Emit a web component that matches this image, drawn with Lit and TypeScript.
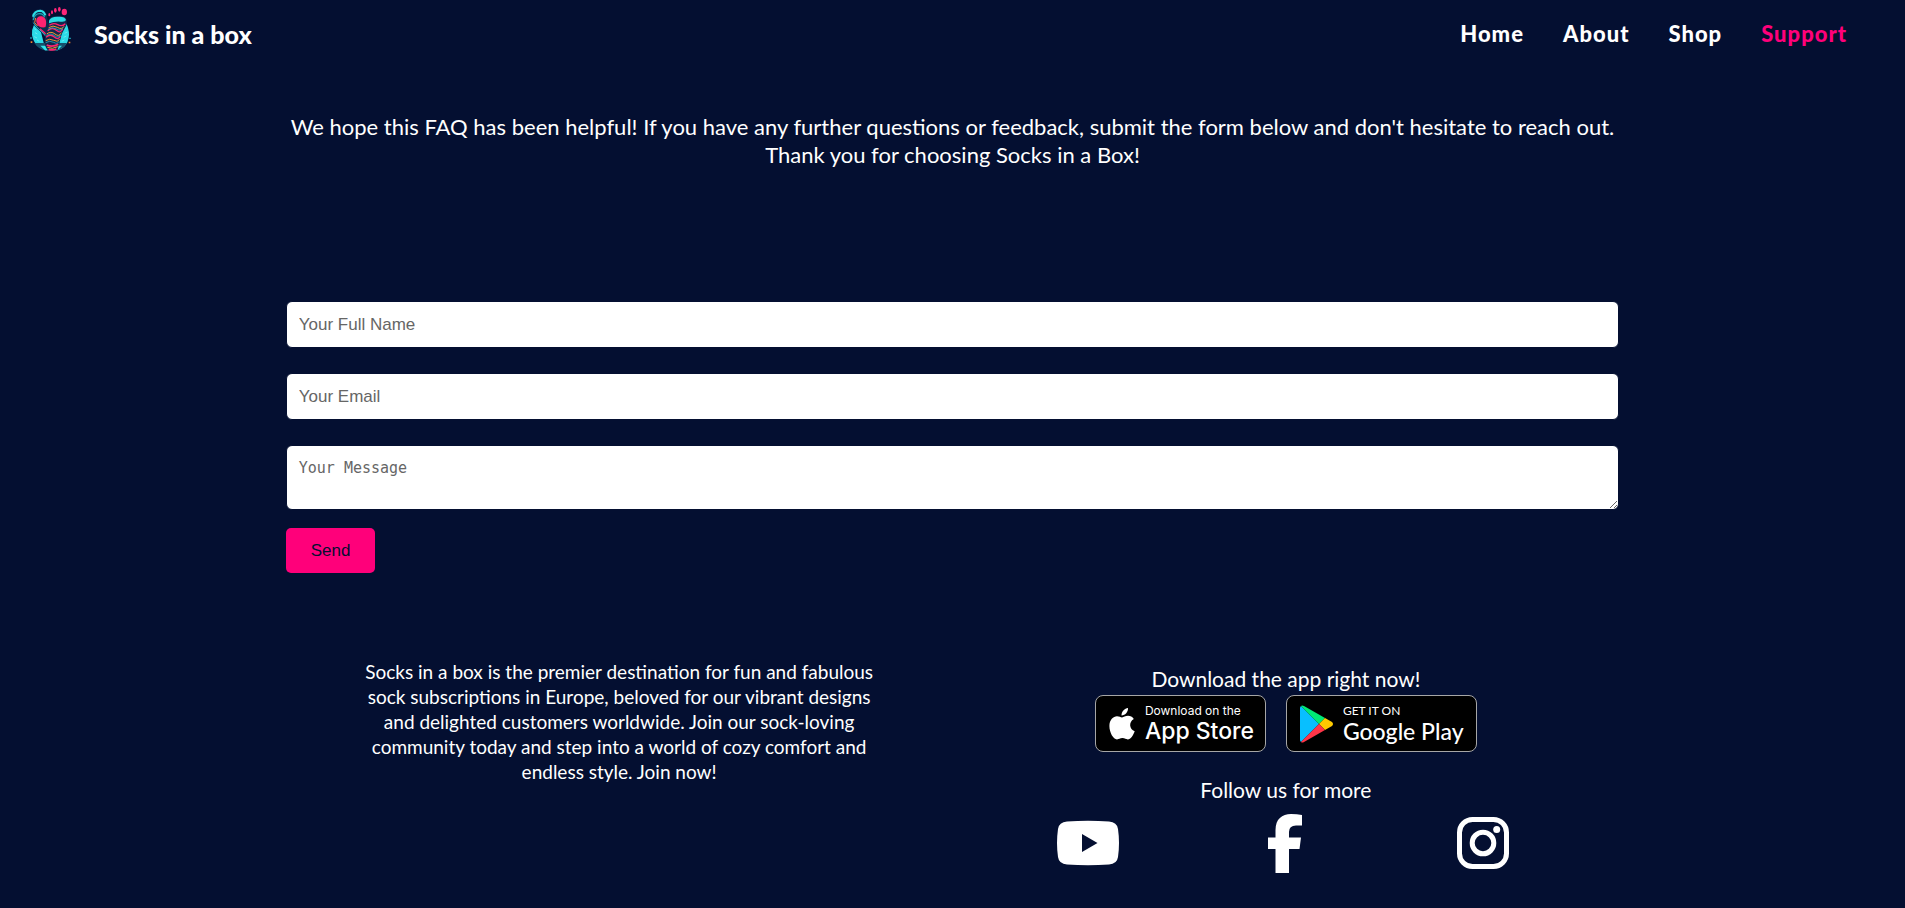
import { LitElement, html, css, svg } from "lit";
import { customElement, property } from "lit/decorators.js";

const foot = svg`
  <path d="M57 74Q49 90 51 105Q55 128 72 142Q88 153 108 153Q132 153 147 140Q161 127 162 104Q162 84 152 68L140 100L126 152H92L78 96Z" fill="#2bdbe8"/>
  <path d="M58 86l6 4M60 98l7 4M58 110l8 4M66 120l7 4M152 84l-6 4M157 96l-8 4M154 108l-8 4M148 120l-8 4" stroke="#8af2f6" stroke-width="2"/>
  <path d="M58 129H156Q149 141 138 147L124 152H92Q70 147 58 129Z" fill="#17506b"/>
  <path d="M76 137l14 14h8l-6-14zM141 137l-13 14h-8l4-14z" fill="#2ee6ee"/>
  <path d="M51 58C48 38 59 27 76 28C88 28 94 38 96 50L101 78L96 118L80 98C66 86 53 76 51 58Z" fill="#0d2b4c"/>
  <path d="M54 50Q58 32 76 32Q87 33 91 46" fill="none" stroke="#2ce0e8" stroke-width="6"/>
  <path d="M55 60Q58 41 74 41Q84 41 89 52" fill="none" stroke="#1aa3b8" stroke-width="4"/>
  <path d="M55 68Q66 84 80 95L92 108" fill="none" stroke="#22bfd0" stroke-width="3"/>
  <path d="M64 66C62 52 74 46 84 50C95 55 95 70 91 82C77 84 67 79 64 66Z" fill="#ff2370"/>
  <path d="M62 54L59 68L68 78" fill="none" stroke="#f97835" stroke-width="3"/>
  <path d="M75 86L95 104" stroke="#ff2370" stroke-width="4"/>
  <path d="M101 62C104 48 119 47 132 48C151 48 157 55 155 70C153 84 142 94 138 110L128 150Q110 156 96 148Q88 138 89 118L94 92Q98 75 101 62Z" fill="#12294e"/>
  <path d="M102 62Q107 49 130 50Q151 49 153 60Q151 67 136 65Q117 64 102 70Z" fill="#2ddce5"/>
  <path d="M103 76Q115 67 128 74T151 71M98 92Q112 80 124 91T143 87M93 112Q106 100 118 111T136 108" fill="none" stroke="#ff236f" stroke-width="4"/>
  <path d="M101 83Q114 74 127 82T147 79M95 102Q108 92 120 102T139 98M92 122Q104 114 116 121T134 118" fill="none" stroke="#f29a2f" stroke-width="3"/>
  <path d="M99 88Q113 79 125 87T144 83M94 107Q107 97 119 107T137 103M92 128Q104 120 116 127T132 124" fill="none" stroke="#25cddd" stroke-width="2"/>
  <path d="M95 135Q112 143 130 133M101 148Q114 152 124 147" fill="none" stroke="#ff236f" stroke-width="5"/>
  <path d="M97 142Q112 149 128 140" fill="none" stroke="#f29a2f" stroke-width="3"/>
  <g fill="#ff2678">
    <ellipse cx="148" cy="36" rx="8" ry="10"/>
    <ellipse cx="133" cy="28" rx="4" ry="7"/>
    <ellipse cx="121" cy="31" rx="4" ry="7"/>
    <ellipse cx="111" cy="37" rx="3" ry="6"/>
    <ellipse cx="103" cy="44" rx="3" ry="5"/>
  </g>
  <path d="M46 112h4v4h-4zM163 113h4v4h-4z" fill="#23cbd9"/>
  <path d="M47 124h5v5h-5zM161 125h5v5h-5z" fill="#ef812f"/>`;

@customElement("site-header")
export class SiteHeader extends LitElement {
  @property() current = "Support";

  static styles = css`
    :host { display: block; }
    .bar {
      display: flex;
      align-items: center;
      justify-content: space-between;
      height: 67px;
      padding: 0 58px 0 15px;
    }
    .brand, .link { text-decoration: none; color: #fff; font-weight: 900; }
    .brand { display: flex; align-items: center; gap: 9px; font-size: 25px; }
    .logo { display: block; width: 70px; height: 60px; margin-bottom: 7px; }
    .nav { display: flex; gap: 39px; }
    .link { font-size: 22px; letter-spacing: 1px; }
    .link[aria-current] { color: #ff007a; }
  `;

  render() {
    return html`
      <header class="bar">
        <a class="brand" href="#home">
          <svg class="logo" viewBox="0 0 210 180" aria-hidden="true">${foot}</svg>
          <span>Socks in a box</span>
        </a>
        <nav class="nav">
          ${["Home", "About", "Shop", "Support"].map((name) =>
            name === this.current
              ? html`<a class="link" href="#${name}" aria-current="page">${name}</a>`
              : html`<a class="link" href="#${name}">${name}</a>`
          )}
        </nav>
      </header>
    `;
  }
}

@customElement("contact-form")
export class ContactForm extends LitElement {
  static styles = css`
    :host { display: block; }
    .form { display: flex; flex-direction: column; align-items: flex-start; }
    .field {
      box-sizing: border-box;
      width: 100%;
      height: 47px;
      margin: 0 0 25px;
      padding: 12px;
      border: 1px solid #040f31;
      border-radius: 6px;
      background: #fff;
      color: #222;
      font: 17px/20px "Liberation Sans", Arial, sans-serif;
    }
    .message {
      height: 65px;
      margin-bottom: 18px;
      font: 15px/20px "DejaVu Sans Mono", monospace;
      resize: both;
    }
    .field::placeholder { color: #666; opacity: 1; }
    .send {
      padding: 12px 25px;
      border: 0;
      border-radius: 5px;
      background: #ff007a;
      color: #040f31;
      font: 17px/21px "Liberation Sans", Arial, sans-serif;
      cursor: pointer;
    }
  `;

  render() {
    return html`
      <form class="form" @submit=${(e: Event) => e.preventDefault()}>
        <input class="field" type="text" name="name" aria-label="Your Full Name" placeholder="Your Full Name" />
        <input class="field" type="email" name="email" aria-label="Your Email" placeholder="Your Email" />
        <textarea class="field message" name="message" aria-label="Your Message" placeholder="Your Message"></textarea>
        <button class="send" type="submit">Send</button>
      </form>
    `;
  }
}

@customElement("site-footer")
export class SiteFooter extends LitElement {
  static styles = css`
    :host { display: block; }
    .footer { display: grid; grid-template-columns: 1fr 1fr; text-align: center; }
    .about { margin: 0 auto; max-width: 530px; font-size: 19px; line-height: 25px; }
    .side { display: flex; flex-direction: column; align-items: center; padding-top: 6px; }
    .title { margin: 0; font-size: 21px; line-height: 28px; font-weight: 400; }
    .badges { display: flex; gap: 20px; margin: 2px 0 24px; }
    .badge {
      box-sizing: border-box;
      display: flex;
      align-items: center;
      height: 57px;
      border: 1px solid #a6a6a6;
      border-radius: 8px;
      background: #000;
      color: #fff;
      text-align: left;
      text-decoration: none;
      white-space: nowrap;
    }
    .apple { width: 171px; padding-left: 13px; gap: 10px; font-family: Inter, sans-serif; }
    .google { width: 191px; padding-left: 13px; gap: 10px; font-family: Lato, sans-serif; }
    .mark { flex: none; }
    .words { display: flex; flex-direction: column; }
    .small { font-size: 12px; line-height: 14px; }
    .large { font-size: 23px; line-height: 26px; font-weight: 500; }
    .social {
      display: grid;
      grid-template-columns: repeat(3, 1fr);
      width: 89%;
      margin-top: 9px;
      justify-items: center;
    }
    .icon { display: block; width: 64px; height: 60px; fill: #fff; }
  `;

  render() {
    return html`
      <footer class="footer">
        <p class="about">
          Socks in a box is the premier destination for fun and fabulous sock subscriptions in Europe, beloved for
          our vibrant designs and delighted customers worldwide. Join our sock-loving community today and step into
          a world of cozy comfort and endless style. Join now!
        </p>
        <div class="side">
          <h2 class="title">Download the app right now!</h2>
          <div class="badges">
            <a class="badge apple" href="#app-store">
              <svg class="mark" width="26" height="32" viewBox="0 0 26 32" fill="#fff" aria-hidden="true">
                <path d="M19 0C19.300 4 16.100 7.400 12.500 7.500C12.200 3.800 15.700 .4 19 0Z"/>
                <path d="M13 9.400C14.700 9.400 16.300 7.800 19 7.800C21.300 7.800 23.500 9 24.800 10.900C19.400 14 20.300 21 25.700 23.200C24.200 27.400 21.600 31.400 18.800 31.400C16.800 31.400 15.900 30.100 13.400 30.100C10.900 30.100 9.900 31.400 8 31.400C4.300 31.400 .4 24.500 .4 18C.4 11.700 4.400 8.200 8 8.200C10.200 8.200 11.700 9.400 13 9.400Z"/>
              </svg>
              <span class="words"><span class="small">Download on the</span><span class="large">App Store</span></span>
            </a>
            <a class="badge google" href="#google-play">
              <svg class="mark" width="33" height="38" viewBox="0 0 33 38" aria-hidden="true">
                <path d="M1 1L19 19L1 37Q0 36 0 35V3Q0 2 1 1Z" fill="#08bfff"/>
                <path d="M1 1Q2 0 4 1L25 13L19 19Z" fill="#00ea75"/>
                <path d="M25 13L32 17Q34 19 32 21L25 25L19 19Z" fill="#ffca00"/>
                <path d="M1 37Q2 38 4 37L25 25L19 19Z" fill="#ff3548"/>
              </svg>
              <span class="words"><span class="small">GET IT ON</span><span class="large">Google Play</span></span>
            </a>
          </div>
          <h2 class="title">Follow us for more</h2>
          <div class="social">
            <a href="#youtube" aria-label="YouTube">
              <svg class="icon" viewBox="0 0 64 60">
                <path fill-rule="evenodd" d="M11 8.500Q32 7 53 8.500Q61 9 62 16Q64 30 62 44Q61 51 53 51.500Q32 53 11 51.500Q3 51 2 44Q0 30 2 16Q3 9 11 8.500ZM26 21V39L41.500 30Z"/>
              </svg>
            </a>
            <a href="#facebook" aria-label="Facebook">
              <svg class="icon" viewBox="0 0 64 60">
                <path d="M21.500 60V36H14V24.500H21.500V17C21.500 6 28 1 37 1Q43 1 48 2V12.500H42Q35 12.500 35 19V24.500H47L45.500 36H35V60Z"/>
              </svg>
            </a>
            <a href="#instagram" aria-label="Instagram">
              <svg class="icon" viewBox="0 0 64 60">
                <rect x="7.500" y="6.500" width="47" height="47" rx="13" fill="none" stroke="#fff" stroke-width="5"/>
                <circle cx="31" cy="30" r="10.800" fill="none" stroke="#fff" stroke-width="5"/>
                <circle cx="44.700" cy="16.500" r="3.500"/>
              </svg>
            </a>
          </div>
        </div>
      </footer>
    `;
  }
}

@customElement("app-root")
export class AppRoot extends LitElement {
  static styles = css`
    :host {
      display: block;
      min-height: 100vh;
      background: #040f31;
      color: #fff;
      font-family: Lato, "Open Sans", sans-serif;
    }
    .page { width: 70%; margin: 0 auto; }
    .intro { margin: 46px 0 132px; font-size: 22px; line-height: 28px; text-align: center; }
    .footer { margin-top: 86px; }
  `;

  render() {
    return html`
      <site-header></site-header>
      <main class="page">
        <p class="intro">
          We hope this FAQ has been helpful! If you have any further questions or feedback, submit the form below
          and don't hesitate to reach out. Thank you for choosing Socks in a Box!
        </p>
        <contact-form></contact-form>
        <site-footer class="footer"></site-footer>
      </main>
    `;
  }
}
